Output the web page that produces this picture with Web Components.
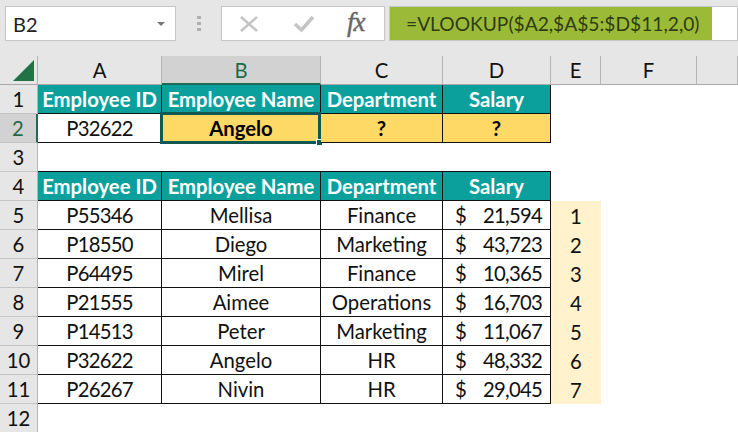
<!DOCTYPE html>
<html>
<head>
<meta charset="utf-8">
<title>VLOOKUP</title>
<style>
  html, body { margin: 0; height: 100%; overflow: hidden; background: #fff; }
  body { font-family: Lato, "Liberation Sans", sans-serif; }
  xl-app { width: 738px; height: 432px; }
</style>
</head>
<body>
<xl-app></xl-app>
<script>
class XlApp extends HTMLElement {
  connectedCallback() {
    this.attachShadow({ mode: 'open' });
    this.shadowRoot.innerHTML = `
      <style>
        :host { display: flex; flex-direction: column; overflow: hidden; }
      </style>
      <xl-formula-bar cell="B2" formula="=VLOOKUP($A2,$A$5:$D$11,2,0)"></xl-formula-bar>
      <xl-sheet></xl-sheet>
    `;
  }
}

class XlFormulaBar extends HTMLElement {
  connectedCallback() {
    this.attachShadow({ mode: 'open' });
    this.shadowRoot.innerHTML = `
      <style>
        :host {
          display: flex;
          height: 56px;
          box-sizing: border-box;
          padding: 6px 0 15px 5px;
          background: #e6e6e6;
          flex: none;
        }
        .box {
          background: #fff;
          border: 1px solid #c6c6c6;
          box-sizing: border-box;
          display: flex;
          align-items: center;
        }
        .name {
          width: 171px;
          padding: 0 10px 0 7px;
          justify-content: space-between;
          font-size: 20px;
          color: #222;
        }
        .arrow {
          width: 0;
          height: 0;
          border-left: 4px solid transparent;
          border-right: 4px solid transparent;
          border-top: 4px solid #777;
        }
        .grip {
          width: 45px;
          display: flex;
          flex-direction: column;
          align-items: center;
          justify-content: center;
          gap: 3px;
        }
        .grip i { width: 4px; height: 3px; background: #b0b0b0; display: block; }
        .tools {
          width: 164px;
          padding-left: 18px;
        }
        .tools svg { display: block; flex: none; }
        .tools svg + svg { margin-left: 36px; }
        .fx {
          font: italic 400 27px "Liberation Serif", serif;
          -webkit-text-stroke: 0.4px #666;
          color: #666;
          margin-left: 33px;
          letter-spacing: -1px;
          position: relative;
          top: -1px;
        }
        .formula {
          margin-left: 4px;
          flex: 1;
          align-items: stretch;
          padding: 0;
        }
        .formula span {
          width: 322px;
          background: #9bbb38;
          color: #2f3b12;
          font-size: 19.2px;
          display: flex;
          align-items: center;
          padding-left: 16px;
          box-sizing: border-box;
          white-space: nowrap;
        }
      </style>
      <div class="box name"><span>${this.getAttribute('cell')}</span><div class="arrow"></div></div>
      <div class="grip"><i></i><i></i><i></i></div>
      <div class="box tools">
        <svg width="18" height="18" viewBox="0 0 18 18"><path d="M1 2 L17 16 M17 2 L1 16" stroke="#c4c4c4" stroke-width="2.6" fill="none"/></svg>
        <svg width="20" height="18" viewBox="0 0 20 18"><path d="M1 9 L7.5 15 L19 2" stroke="#c4c4c4" stroke-width="3.6" fill="none"/></svg>
        <span class="fx">fx</span>
      </div>
      <div class="box formula"><span>${this.getAttribute('formula')}</span></div>
    `;
  }
}

class XlCell extends HTMLElement {
  connectedCallback() {
    this.attachShadow({ mode: 'open' });
    this.shadowRoot.innerHTML = `
      <style>
        :host {
          display: flex;
          align-items: center;
          justify-content: center;
          box-sizing: border-box;
          position: relative;
          font-size: 20.3px;
          color: #111;
          white-space: nowrap;
          min-width: 0;
        }
        :host([num]) { letter-spacing: -0.75px; }
        :host([kind="col"]) { background: #e6e6e6; border-right: 1px solid #b4b4b4; border-bottom: 1px solid #a8a8a8; }
        :host([kind="row"]) { background: #e6e6e6; border-right: 1px solid #b4b4b4; border-bottom: 1px solid #c4c4c4; }
        :host([sel]) { background: #d2d2d2; color: #1f6b45; }
        :host([kind="col"][sel]) { border-bottom: 2px solid #1f6b55; }
        :host([kind="row"][sel]) { border-right: 2px solid #1f6b55; }
        :host([kind="head"]) { background: #0ca09c; color: #fff; font-weight: 700; border-right: 1px solid #111; border-bottom: 1px solid #111; }
        :host([kind="ask"]) { background: #ffd966; font-weight: 700; color: #000; border-right: 1px solid #111; border-bottom: 1px solid #111; }
        :host([kind="data"]) { border-right: 1px solid #111; border-bottom: 1px solid #111; }
        :host([kind="money"]) { border-right: 1px solid #111; border-bottom: 1px solid #111; justify-content: space-between; padding: 0 8px 0 12px; }
        :host([kind="note"]) { background: #fff2cc; }
        :host([kind="base"]) { border-bottom: 1px solid #111; }
        .active {
          position: absolute;
          left: -2px;
          top: -2px;
          right: -1px;
          bottom: -2px;
          border: 3px solid #11594f;
          pointer-events: none;
        }
        .active::after {
          content: "";
          position: absolute;
          right: -5px;
          bottom: -5px;
          width: 5px;
          height: 5px;
          background: #11594f;
          border: 1px solid #fff;
        }
      </style>
      <slot></slot>
      ${this.hasAttribute('active') ? '<div class="active"></div>' : ''}
    `;
  }
}

const COLS = ['A', 'B', 'C', 'D', 'E', 'F', ''];
const HEAD = ['Employee ID', 'Employee Name', 'Department', 'Salary'];
const RECORDS = [
  ['P55346', 'Mellisa', 'Finance', '21,594'],
  ['P18550', 'Diego', 'Marketing', '43,723'],
  ['P64495', 'Mirel', 'Finance', '10,365'],
  ['P21555', 'Aimee', 'Operations', '16,703'],
  ['P14513', 'Peter', 'Marketing', '11,067'],
  ['P32622', 'Angelo', 'HR', '48,332'],
  ['P26267', 'Nivin', 'HR', '29,045']
];

class XlSheet extends HTMLElement {
  connectedCallback() {
    this.attachShadow({ mode: 'open' });
    let html = '<xl-cell kind="col" class="corner"><svg width="21" height="21" viewBox="0 0 21 21"><path d="M0 21 L21 0 L21 21 Z" fill="#217346"/></svg></xl-cell>';
    COLS.forEach(c => {
      html += `<xl-cell kind="col"${c === 'B' ? ' sel' : ''}>${c}</xl-cell>`;
    });
    const cell = (attrs, text) => `<xl-cell ${attrs}>${text}</xl-cell>`;
    const blank = n => '<xl-cell></xl-cell>'.repeat(n);
    for (let r = 1; r <= 12; r++) {
      html += cell(r === 2 ? 'kind="row" sel' : 'kind="row"', r);
      if (r === 1 || r === 4) {
        html += HEAD.map(h => cell('kind="head"', h)).join('') + blank(3);
      } else if (r === 2) {
        html += cell('kind="data" num', 'P32622') + cell('kind="ask" active', 'Angelo') +
          cell('kind="ask"', '?') + cell('kind="ask"', '?') + blank(3);
      } else if (r >= 5 && r <= 11) {
        const d = RECORDS[r - 5];
        html += cell('kind="data" num', d[0]) + cell('kind="data"', d[1]) + cell('kind="data"', d[2]) +
          cell('kind="money" num', `<span>$</span><span>${d[3]}</span>`) +
          cell('kind="note"', r - 4) + blank(2);
      } else if (r === 3) {
        html += cell('kind="base"', '') + cell('kind="base"', '') + cell('kind="base"', '') + cell('kind="base"', '') + blank(3);
      } else {
        html += blank(7);
      }
    }
    this.shadowRoot.innerHTML = `
      <style>
        :host {
          display: grid;
          flex: none;
          grid-template-columns: 38px 124px 159px 122px 108px 50px 96px 41px;
          grid-auto-rows: 29px;
          background: #fff;
        }
        .corner { align-items: flex-end; justify-content: flex-end; padding: 0 3px 3px 0; }
        .corner svg { display: block; }
      </style>
      ${html}
    `;
  }
}

customElements.define('xl-cell', XlCell);
customElements.define('xl-formula-bar', XlFormulaBar);
customElements.define('xl-sheet', XlSheet);
customElements.define('xl-app', XlApp);
</script>
</body>
</html>
